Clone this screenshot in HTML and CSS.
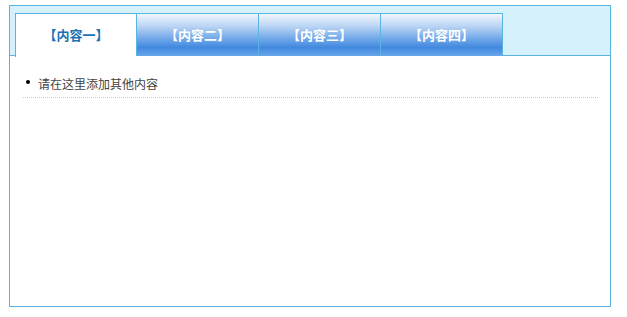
FILE: index.html
```html
<!DOCTYPE html>
<html>
<head>
<meta charset="utf-8">
<link rel="stylesheet" href="styles.css">
</head>
<body>
<div class="box">
  <ul class="tabs">
    <li class="tab active">【内容一】</li>
    <li class="tab">【内容二】</li>
    <li class="tab">【内容三】</li>
    <li class="tab last">【内容四】</li>
  </ul>
  <div class="content">
    <ul class="list">
      <li class="item">请在这里添加其他内容</li>
    </ul>
  </div>
</div>
</body>
</html>
```
FILE: styles.css
```css
html, body {
  margin: 0;
  padding: 0;
  background: #fff;
}
body {
  padding: 5px 0 0 9px;
  font-family: "Noto Sans CJK SC", "Liberation Sans", sans-serif;
}
.box {
  width: 600px;
  height: 300px;
  border: 1px solid #5ab4e2;
  display: flex;
  flex-direction: column;
}
.tabs {
  list-style: none;
  margin: 0;
  padding: 7px 0 0 5px;
  height: 42px;
  background: #d5f1fc;
  border-bottom: 1px solid #5ab4e2;
  display: flex;
  align-items: flex-start;
}
.tab {
  width: 121px;
  height: 42px;
  border-top: 1px solid #5ab4e2;
  border-left: 1px solid #5ab4e2;
  background: linear-gradient(to bottom, #f2f7fe 0%, #b8d3f3 30%, #6ea6e8 60%, #4189df 80%, #6aa6ea 100%);
  color: #fff;
  font-weight: bold;
  font-size: 13px;
  line-height: 42px;
  text-align: center;
  flex: none;
}
.tab.active {
  width: 120px;
  background: #fff;
  color: #1a72b4;
  height: 43px;
  margin-bottom: -1px;
}
.tab.last {
  border-right: 1px solid #5ab4e2;
}
.content {
  flex: 1;
  padding: 14px 12px 0 13px;
}
.list {
  list-style: none;
  margin: 0;
  padding: 0;
}
.item {
  position: relative;
  height: 27px;
  line-height: 27px;
  border-bottom: 1px dotted #c8c8c8;
  font-size: 12px;
  color: #444;
  padding-left: 15px;
}
.item::before {
  content: "";
  position: absolute;
  left: 3px;
  top: 10px;
  width: 4px;
  height: 4px;
  border-radius: 50%;
  background: #000;
}
```
